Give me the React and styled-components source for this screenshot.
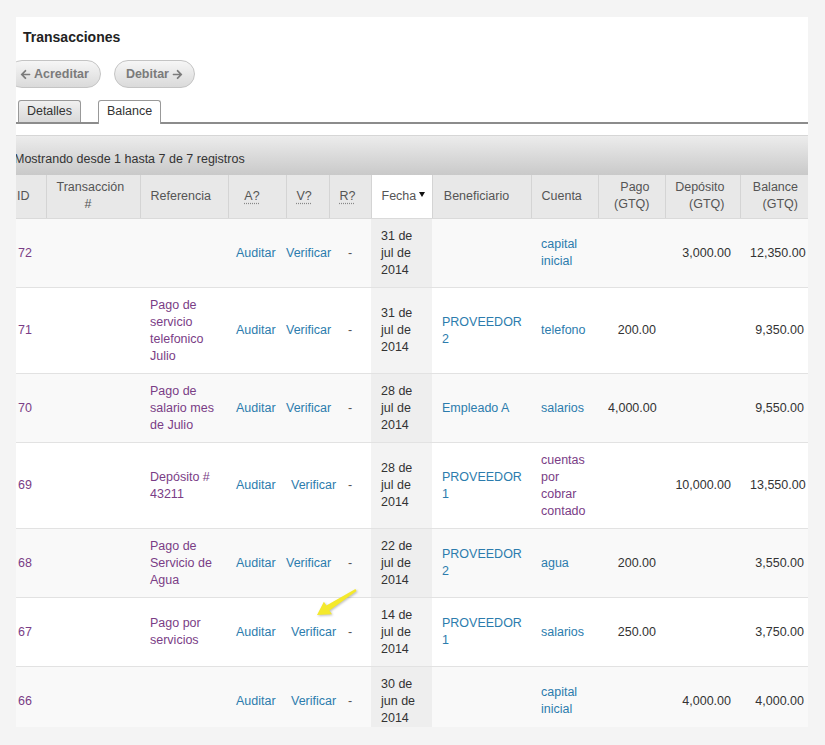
import React from 'react';
import styled, { createGlobalStyle } from 'styled-components';
import { FaArrowLeft, FaArrowRight } from 'react-icons/fa';

const GlobalStyle = createGlobalStyle`
  html, body {
    margin: 0;
    padding: 0;
    background: #f4f4f4;
  }

  body {
    font-family: "Liberation Sans", Arial, sans-serif;
  }
`;

const Page = styled.div`
  height: 745px;
  padding: 17px 17px 0 16px;
  box-sizing: border-box;
`;

const Panel = styled.div`
  position: relative;
  width: 792px;
  height: 710px;
  background: #fff;
  overflow: hidden;
`;

const Inner = styled.div`
  width: 824px;
  margin-left: -8px;
  padding-top: 10px;
`;

const Title = styled.h3`
  margin: 0;
  padding-left: 15px;
  font-size: 14px;
  line-height: 20px;
  font-weight: 700;
  color: #222;
`;

const Toolbar = styled.div`
  display: flex;
  gap: 13px;
  margin-top: 13px;
`;

const PillButton = styled.button`
  display: inline-flex;
  align-items: center;
  gap: 3px;
  height: 28px;
  padding: 0 11px;
  box-sizing: border-box;
  border: 1px solid #c4c4c4;
  border-radius: 14px;
  background: linear-gradient(#f6f6f6, #dadada);
  color: #7b7b7b;
  font-family: inherit;
  font-size: 12.5px;
  font-weight: 700;

  svg {
    width: 11px;
    height: 11px;
  }
`;

const Tabs = styled.div`
  display: flex;
  align-items: flex-end;
  gap: 17px;
  margin-top: 12px;
  padding-left: 10px;
  border-bottom: 2px solid #8c8c8c;
`;

const Tab = styled.div`
  width: 63px;
  height: ${(p) => (p.$active ? '24px' : '22px')};
  margin-bottom: ${(p) => (p.$active ? '-2px' : '0')};
  box-sizing: border-box;
  border: 1px solid #999;
  border-bottom: none;
  border-radius: 3px 3px 0 0;
  background: ${(p) => (p.$active ? '#fff' : 'linear-gradient(#f0f0f0, #d9d9d9)')};
  color: #333;
  font-size: 12.5px;
  line-height: 21px;
  text-align: center;
`;

const InfoBar = styled.div`
  height: 40px;
  margin-top: 11px;
  padding: 15px 0 0 6px;
  box-sizing: border-box;
  border-top: 1px solid #d6d6d6;
  background: linear-gradient(#ececec, #c9c9c9);
  color: #333;
  font-size: 12.5px;
  line-height: 17px;
`;

const Table = styled.table`
  width: 805px;
  table-layout: fixed;
  border-collapse: collapse;
  font-size: 12.5px;
`;

const HeadRow = styled.tr`
  height: 43px;
`;

const headPadding = {
  right: '4px 15px 4px 6px',
  left: '4px 6px 4px 9px',
  sorted: '4px 4px 4px 10px',
};

const Th = styled.th`
  padding: ${(p) => headPadding[p.$sorted ? 'sorted' : p.$align] || '4px 20px 4px 10px'};
  border-left: 1px solid #d4d4d4;
  border-bottom: 1px solid #dadada;
  background: ${(p) => (p.$sorted ? '#fff' : '#e8e8e8')};
  color: #555;
  font-weight: 400;
  line-height: 17px;
  text-align: ${(p) => (p.$sorted ? 'left' : p.$align || 'center')};
  white-space: ${(p) => (p.$sorted ? 'nowrap' : 'normal')};
  vertical-align: middle;

  &:first-child {
    border-left: none;
  }
`;

const Abbr = styled.span`
  text-decoration: underline dotted #888;
  text-underline-offset: 3px;
`;

const SortDown = styled.span`
  display: inline-block;
  margin-left: 3px;
  vertical-align: 3px;
  border-left: 3.5px solid transparent;
  border-right: 3.5px solid transparent;
  border-top: 5px solid #111;
`;

const Row = styled.tr`
  background: ${(p) => (p.$odd ? '#f9f9f9' : '#fff')};
  border-top: 1px solid #e2e2e2;
`;

const Td = styled.td`
  padding: 9px ${(p) => (p.$align === 'right' ? '9px' : '10px')} 8px ${(p) => p.$pl ?? 10}px;
  line-height: 17px;
  vertical-align: middle;
  text-align: ${(p) => p.$align || 'left'};
  white-space: ${(p) => (p.$nowrap ? 'nowrap' : 'normal')};
  color: #333;
  background: ${(p) => (p.$sorted ? (p.$odd ? '#eeeeee' : '#f3f3f3') : 'transparent')};
`;

const Link = styled.a`
  color: ${(p) => (p.$visited ? '#7a3d86' : '#2c7cad')};
  text-decoration: none;
`;

const Dash = styled.span`
  color: #555;
`;

const Pointer = styled.svg`
  position: absolute;
  left: 295px;
  top: 568px;
  filter: drop-shadow(1px 1px 1px rgba(0, 0, 0, 0.25));
`;

const rows = [
  { id: 72, ref: '', date: '31 de jul de 2014', benef: '', cuenta: 'capital inicial', pago: '', dep: '3,000.00', bal: '12,350.00' },
  { id: 71, ref: 'Pago de servicio telefonico Julio', date: '31 de jul de 2014', benef: 'PROVEEDOR 2', cuenta: 'telefono', pago: '200.00', dep: '', bal: '9,350.00' },
  { id: 70, ref: 'Pago de salario mes de Julio', date: '28 de jul de 2014', benef: 'Empleado A', cuenta: 'salarios', pago: '4,000.00', dep: '', bal: '9,550.00' },
  { id: 69, ref: 'Depósito # 43211', date: '28 de jul de 2014', benef: 'PROVEEDOR 1', cuenta: 'cuentas por cobrar contado', cuentaVisited: true, pago: '', dep: '10,000.00', bal: '13,550.00', shift: true },
  { id: 68, ref: 'Pago de Servicio de Agua', date: '22 de jul de 2014', benef: 'PROVEEDOR 2', cuenta: 'agua', pago: '200.00', dep: '', bal: '3,550.00' },
  { id: 67, ref: 'Pago por servicios', date: '14 de jul de 2014', benef: 'PROVEEDOR 1', cuenta: 'salarios', pago: '250.00', dep: '', bal: '3,750.00', shift: true },
  { id: 66, ref: '', date: '30 de jun de 2014', benef: '', cuenta: 'capital inicial', pago: '', dep: '4,000.00', bal: '4,000.00', shift: true },
];

const widths = [38, 94, 88, 58, 43, 42, 61, 99, 67, 67, 75, 73];

const App = () => (
  <>
    <GlobalStyle />
    <Page>
      <Panel>
        <Inner>
          <Title>Transacciones</Title>
          <Toolbar>
            <PillButton><FaArrowLeft />Acreditar</PillButton>
            <PillButton>Debitar<FaArrowRight /></PillButton>
          </Toolbar>
          <Tabs>
            <Tab>Detalles</Tab>
            <Tab $active>Balance</Tab>
          </Tabs>
          <InfoBar>Mostrando desde 1 hasta 7 de 7 registros</InfoBar>
          <Table>
            <colgroup>
              {widths.map((w, i) => <col key={i} style={{ width: w }} />)}
            </colgroup>
            <thead>
              <HeadRow>
                <Th $align="left">ID</Th>
                <Th>Transacción #</Th>
                <Th>Referencia</Th>
                <Th><Abbr>A?</Abbr></Th>
                <Th><Abbr>V?</Abbr></Th>
                <Th><Abbr>R?</Abbr></Th>
                <Th $sorted>Fecha<SortDown /></Th>
                <Th>Beneficiario</Th>
                <Th>Cuenta</Th>
                <Th $align="right">Pago (GTQ)</Th>
                <Th $align="right">Depósito (GTQ)</Th>
                <Th $align="right">Balance (GTQ)</Th>
              </HeadRow>
            </thead>
            <tbody>
              {rows.map((r, i) => {
                const odd = i % 2 === 0;
                return (
                  <Row key={r.id} $odd={odd}>
                    <Td><Link $visited>{r.id}</Link></Td>
                    <Td />
                    <Td><Link $visited>{r.ref}</Link></Td>
                    <Td $pl={8} $nowrap><Link>Auditar</Link></Td>
                    <Td $pl={r.shift ? 5 : 0} $nowrap><Link>Verificar</Link></Td>
                    <Td $align="center"><Dash>-</Dash></Td>
                    <Td $sorted $odd={odd}>{r.date}</Td>
                    <Td><Link>{r.benef}</Link></Td>
                    <Td><Link $visited={r.cuentaVisited}>{r.cuenta}</Link></Td>
                    <Td $align="right">{r.pago}</Td>
                    <Td $align="right">{r.dep}</Td>
                    <Td $align="right">{r.bal}</Td>
                  </Row>
                );
              })}
            </tbody>
          </Table>
        </Inner>
        <Pointer width="50" height="36" viewBox="0 0 50 36">
          <polygon
            points="44.4,4 15.4,20.6 12.85,16.7 6,30 20.95,29.3 18.4,25.4 45.6,6"
            fill="#f4e92c"
          />
        </Pointer>
      </Panel>
    </Page>
  </>
);

export default App;
